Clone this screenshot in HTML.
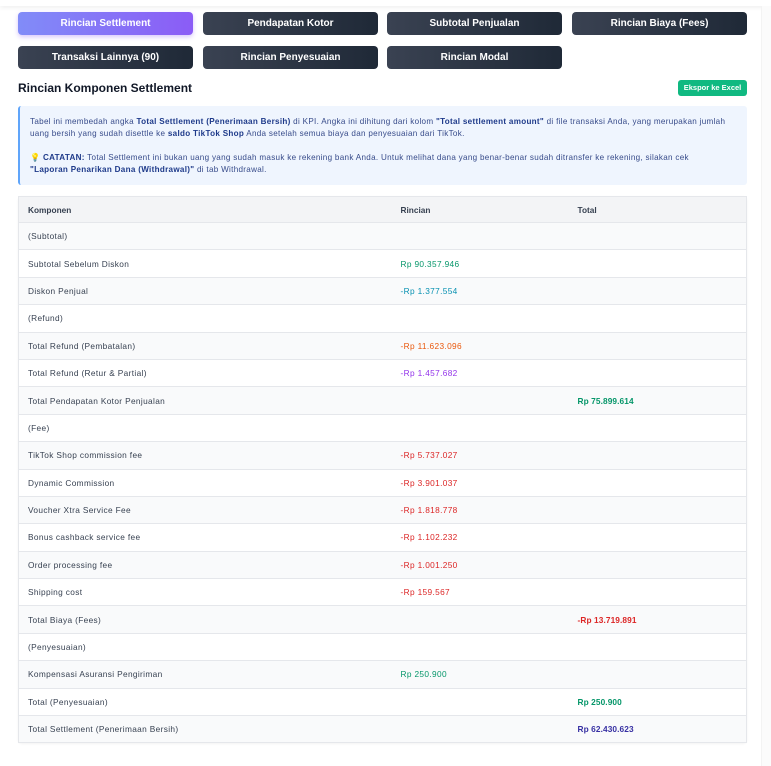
<!DOCTYPE html>
<html><head><meta charset="utf-8"><style>
*{box-sizing:border-box;margin:0;padding:0}
body{width:771px;height:766px;background:#fff;font-family:"Liberation Sans",sans-serif;position:relative;overflow:hidden;color:#374151}
.topline{position:absolute;left:0;top:0;width:771px;height:6px;box-shadow:0 2px 4px rgba(0,0,0,.06)}
.rightedge{position:absolute;right:0;top:6px;width:10px;height:760px;background:#fbfbfb;border-left:1px solid #f3f3f3}
.btn{position:absolute;height:23px;width:175px;border-radius:4px;background:linear-gradient(90deg,#3a4252,#1f2937);color:#fff;font-size:10px;font-weight:bold;text-align:center;line-height:23px}
.btn.act{background:linear-gradient(90deg,#818cf8,#8b5cf6);box-shadow:0 2px 5px rgba(139,92,246,.35)}
h2{position:absolute;left:18px;top:81px;font-size:12px;font-weight:bold;color:#111827}
.exp{position:absolute;left:678px;top:80px;width:69px;height:16px;background:#10b981;color:#fff;font-size:7.5px;font-weight:bold;text-align:center;line-height:16px;border-radius:3px}
.info{position:absolute;left:18px;top:106px;width:729px;height:79px;background:#eff5fe;border-left:2px solid #60a5fa;border-radius:3px;padding:10px 10px;font-size:8.1px;letter-spacing:.3px;line-height:12px;color:#374b8a;white-space:nowrap}
.info b{color:#1e3a8a}
table{position:absolute;left:18px;top:196px;width:729px;border-collapse:collapse;font-size:8.3px;letter-spacing:.35px;border:1px solid #e5e7eb;border-radius:4px;box-shadow:0 1px 2px rgba(0,0,0,.05)}
td,th{height:27.4px;padding:0 0 0 9px;text-align:left;border-bottom:1px solid #e5e7eb}
th{height:26px;background:#f3f4f6;font-weight:bold;color:#374151;letter-spacing:0}
tr:nth-child(even) td{background:#f9fafb}
.c1{width:373px}.c2{width:177px}
.g{color:#059669}.t{color:#0891b2}.o{color:#ea580c}.p{color:#9333ea}.r{color:#dc2626}.b{color:#3730a3}
td b{font-weight:bold;letter-spacing:.1px}
</style></head><body>
<div class="topline"></div>
<div class="rightedge"></div>
<div class="btn act" style="left:18px;top:12px">Rincian Settlement</div>
<div class="btn" style="left:203px;top:12px">Pendapatan Kotor</div>
<div class="btn" style="left:387px;top:12px">Subtotal Penjualan</div>
<div class="btn" style="left:572px;top:12px">Rincian Biaya (Fees)</div>
<div class="btn" style="left:18px;top:46px">Transaksi Lainnya (90)</div>
<div class="btn" style="left:203px;top:46px">Rincian Penyesuaian</div>
<div class="btn" style="left:387px;top:46px">Rincian Modal</div>
<h2>Rincian Komponen Settlement</h2>
<div class="exp">Ekspor ke Excel</div>
<div class="info">Tabel ini membedah angka <b>Total Settlement (Penerimaan Bersih)</b> di KPI. Angka ini dihitung dari kolom <b>"Total settlement amount"</b> di file transaksi Anda, yang merupakan jumlah<br>uang bersih yang sudah disettle ke <b>saldo TikTok Shop</b> Anda setelah semua biaya dan penyesuaian dari TikTok.<br><br><span style="color:#facc15">💡</span> <b>CATATAN:</b> Total Settlement ini bukan uang yang sudah masuk ke rekening bank Anda. Untuk melihat dana yang benar-benar sudah ditransfer ke rekening, silakan cek<br><b>"Laporan Penarikan Dana (Withdrawal)"</b> di tab Withdrawal.</div>
<table>
<tr><th class="c1">Komponen</th><th class="c2">Rincian</th><th>Total</th></tr>
<tr><td>(Subtotal)</td><td></td><td></td></tr>
<tr><td>Subtotal Sebelum Diskon</td><td class="g">Rp 90.357.946</td><td></td></tr>
<tr><td>Diskon Penjual</td><td class="t">-Rp 1.377.554</td><td></td></tr>
<tr><td>(Refund)</td><td></td><td></td></tr>
<tr><td>Total Refund (Pembatalan)</td><td class="o">-Rp 11.623.096</td><td></td></tr>
<tr><td>Total Refund (Retur &amp; Partial)</td><td class="p">-Rp 1.457.682</td><td></td></tr>
<tr><td>Total Pendapatan Kotor Penjualan</td><td></td><td class="g"><b>Rp 75.899.614</b></td></tr>
<tr><td>(Fee)</td><td></td><td></td></tr>
<tr><td>TikTok Shop commission fee</td><td class="r">-Rp 5.737.027</td><td></td></tr>
<tr><td>Dynamic Commission</td><td class="r">-Rp 3.901.037</td><td></td></tr>
<tr><td>Voucher Xtra Service Fee</td><td class="r">-Rp 1.818.778</td><td></td></tr>
<tr><td>Bonus cashback service fee</td><td class="r">-Rp 1.102.232</td><td></td></tr>
<tr><td>Order processing fee</td><td class="r">-Rp 1.001.250</td><td></td></tr>
<tr><td>Shipping cost</td><td class="r">-Rp 159.567</td><td></td></tr>
<tr><td>Total Biaya (Fees)</td><td></td><td class="r"><b>-Rp 13.719.891</b></td></tr>
<tr><td>(Penyesuaian)</td><td></td><td></td></tr>
<tr><td>Kompensasi Asuransi Pengiriman</td><td class="g">Rp 250.900</td><td></td></tr>
<tr><td>Total (Penyesuaian)</td><td></td><td class="g"><b>Rp 250.900</b></td></tr>
<tr><td>Total Settlement (Penerimaan Bersih)</td><td></td><td class="b"><b>Rp 62.430.623</b></td></tr>
</table>
</body></html>
